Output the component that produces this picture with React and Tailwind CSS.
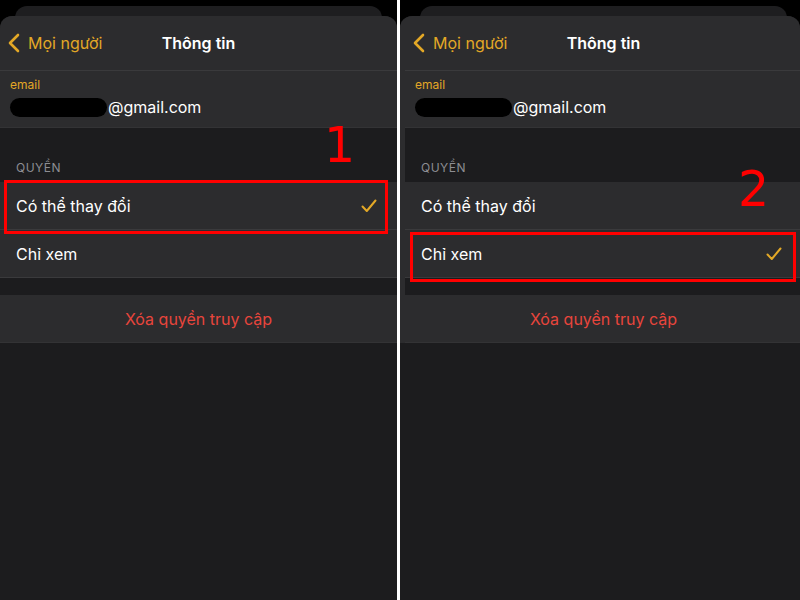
import React from 'react';

const YELLOW = 'text-[#e3a826]';

function Chevron() {
    return (
        <svg width="12" height="20" viewBox="0 0 12 20" className="shrink-0">
            <path d="M10 2 L2 10 L10 18" fill="none" stroke="#e3a826" strokeWidth="2.6" strokeLinecap="round" strokeLinejoin="round" />
        </svg>
    );
}

function Check() {
    return (
        <svg width="16" height="14" viewBox="0 0 16 14">
            <path d="M1.5 7.5 L5.8 12 L14.5 1.5" fill="none" stroke="#e3a826" strokeWidth="2" strokeLinecap="round" strokeLinejoin="round" />
        </svg>
    );
}

function Screen({ selected }) {
    const options = ['Có thể thay đổi', 'Chỉ xem'];
    return (
        <div className="w-[397px] flex flex-col">
            {/* Nav bar */}
            <div className="h-[55px] relative flex items-center border-b border-[#3a3a3c]">
                <div className={`flex items-center gap-[8px] pl-[8px] ${YELLOW} text-[16px]`}>
                    <Chevron />
                    <span>Mọi người</span>
                </div>
                <div className="absolute left-0 right-0 text-center text-white font-semibold text-[16px] pointer-events-none">
                    Thông tin
                </div>
            </div>

            {/* Email */}
            <div className="h-[57px] px-[10px] pt-[6px] border-b border-[#333335]">
                <div className={`text-[12px] leading-[16px] ${YELLOW}`}>email</div>
                <div className="flex items-center mt-[2px]">
                    <div className="w-[97px] h-[19px] rounded-full bg-black" />
                    <span className="text-white text-[16px] leading-[24px] ml-[1px]">@gmail.com</span>
                </div>
            </div>

            {/* Section header */}
            <div className="h-[54px] bg-[#1c1c1e] flex items-end px-4 pb-[5px]">
                <span className="text-[12px] text-[#8d8d92] tracking-[0.5px]">QUYỀN</span>
            </div>

            {/* Options */}
            <div className="bg-[#2c2c2e]">
                {options.map((opt, i) => (
                    <div key={opt} className="h-[48px] flex items-center pl-4 pr-[20px] justify-between border-b border-[#3a3a3c]">
                        <span className="text-white text-[16px]">{opt}</span>
                        {selected === i && <Check />}
                    </div>
                ))}
            </div>

            <div className="h-[17px] bg-[#1c1c1e]" />

            <div className="h-[48px] bg-[#2c2c2e] flex items-center justify-center border-b border-[#333335]">
                <span className="text-[#e8453c] text-[16px]">Xóa quyền truy cập</span>
            </div>
        </div>
    );
}

function Panel({ selected, shift, children }) {
    return (
        <div className="relative h-full bg-black overflow-hidden" style={{ width: shift ? 400 : 397 }}>
            {/* back sheet */}
            <div className={`absolute top-[6px] h-[30px] rounded-t-[12px] bg-[#1e1e20] ${shift ? 'left-[20px] w-[367px]' : 'left-[15px] w-[367px]'}`} />
            {/* front sheet */}
            <div className="absolute top-[16px] left-0 right-0 bottom-0 rounded-tl-[12px] rounded-tr-[12px] bg-[#1c1c1e] overflow-hidden">
                <div className="bg-[#2c2c2e]" style={{ paddingLeft: shift ? 5 : 0 }}>
                    <Screen selected={selected} />
                </div>
            </div>
            {children}
        </div>
    );
}

const markFont = { fontFamily: '"DejaVu Sans", sans-serif' };

export default function App() {
    return (
        <div className="w-[800px] h-[600px] flex bg-white overflow-hidden" style={{ fontFamily: 'Inter, "Noto Sans", sans-serif' }}>
            <Panel selected={0}>
                {/* annotation 1 */}
                <div className="absolute left-[324px] top-[121px] text-[#ff0000] text-[49px] leading-none" style={markFont}>1</div>
                <div className="absolute left-[4px] top-[180px] w-[384px] h-[54px] border-[3px] border-[#ff0000]" />
            </Panel>
            <div className="w-[3px] h-full bg-white" />
            <Panel selected={1} shift>
                {/* annotation 2 */}
                <div className="absolute left-[338px] top-[165px] text-[#ff0000] text-[49px] leading-none" style={markFont}>2</div>
                <div className="absolute left-[10px] top-[232px] w-[386px] h-[50px] border-[3px] border-[#ff0000]" />
            </Panel>
        </div>
    );
}
